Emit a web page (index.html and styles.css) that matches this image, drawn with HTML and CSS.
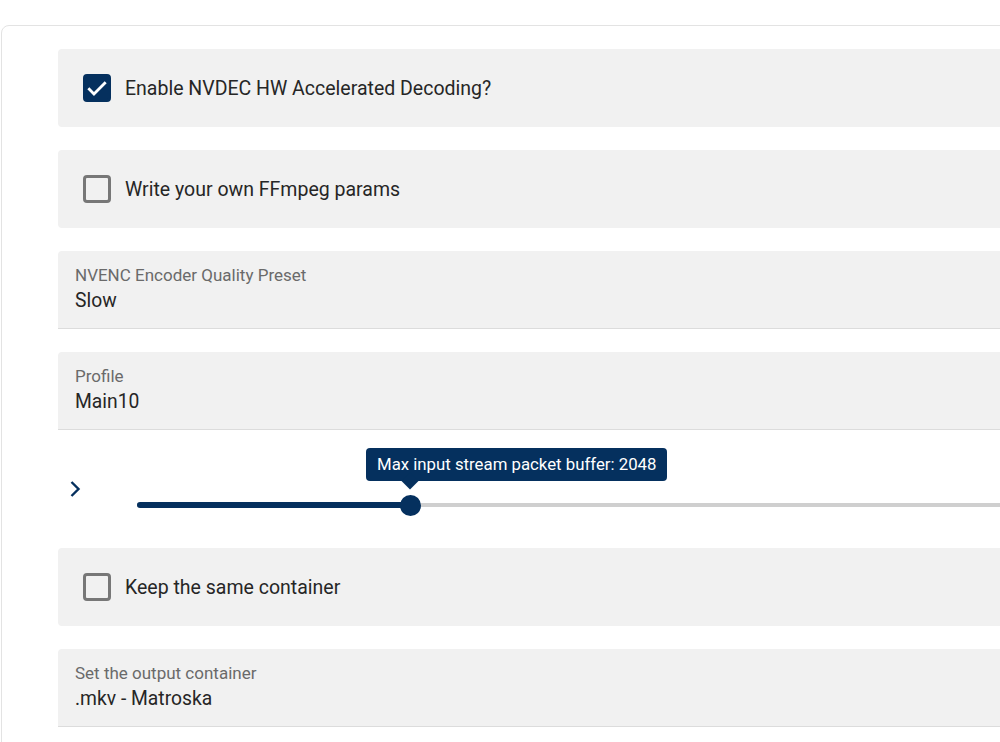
FILE: index.html
```html
<!DOCTYPE html>
<html lang="en">
<head>
    <meta charset="UTF-8">
    <meta name="viewport" content="width=device-width, initial-scale=1.0">
    <title>Transcode settings</title>
    <link rel="stylesheet" href="styles.css">
</head>
<body>
    <div class="card">
        <label class="panel check-row">
            <span class="box checked">
                <svg class="tick" viewBox="0 0 24 24" width="26" height="26"><path d="M4 12.3l5.2 5.2L20 6.8" fill="none" stroke="#fff" stroke-width="2.6"/></svg>
            </span>
            <span class="check-text">Enable NVDEC HW Accelerated Decoding?</span>
        </label>

        <label class="panel check-row">
            <span class="box"></span>
            <span class="check-text">Write your own FFmpeg params</span>
        </label>

        <div class="panel field">
            <span class="field-label">NVENC Encoder Quality Preset</span>
            <span class="field-value">Slow</span>
        </div>

        <div class="panel field">
            <span class="field-label">Profile</span>
            <span class="field-value">Main10</span>
        </div>

        <div class="slider-row">
            <svg class="chevron" viewBox="0 0 12 18" width="12" height="18"><path d="M2.5 2l7 7-7 7" fill="none" stroke="#05305e" stroke-width="2.4"/></svg>
            <div class="slider">
                <div class="track"></div>
                <div class="track-fill" style="width: 273px"></div>
                <div class="thumb" style="left: 273px">
                    <div class="tip">Max input stream packet buffer: 2048</div>
                </div>
            </div>
        </div>

        <label class="panel check-row">
            <span class="box"></span>
            <span class="check-text">Keep the same container</span>
        </label>

        <div class="panel field">
            <span class="field-label">Set the output container</span>
            <span class="field-value">.mkv - Matroska</span>
        </div>
    </div>
</body>
</html>
```

FILE: styles.css
```css
body {
    margin: 0;
    padding: 0;
    background-color: #fff;
    font-family: Roboto, "Liberation Sans", sans-serif;
    color: #222;
    overflow: hidden;
}

.card {
    width: 1100px;
    margin: 25px 0 0 1px;
    padding: 23px 0 40px 56px;
    border: 1px solid #e3e3e3;
    border-radius: 8px 0 0 0;
}

.panel {
    height: 78px;
    margin-bottom: 23px;
    background-color: #f1f1f1;
    border-radius: 4px 0 0 4px;
    box-sizing: border-box;
}

.check-row {
    display: flex;
    align-items: center;
    padding-left: 25px;
    cursor: pointer;
}

.box {
    width: 28px;
    height: 28px;
    box-sizing: border-box;
    border: 3px solid #777;
    border-radius: 4px;
    display: flex;
    align-items: center;
    justify-content: center;
}

.box.checked {
    background-color: #05305e;
    border-color: #05305e;
}

.tick {
    flex: none;
}

.check-text {
    margin-left: 14px;
    font-size: 19.5px;
    color: #262626;
}

.field {
    display: flex;
    flex-direction: column;
    padding: 14px 17px 0;
    border-radius: 4px 0 0 0;
    border-bottom: 1px solid #dcdcdc;
}

.field-label {
    font-size: 17px;
    color: #6a6a6a;
}

.field-value {
    margin-top: 4px;
    font-size: 19.3px;
    color: #262626;
}

/* slider with the value bubble */
.slider-row {
    display: flex;
    align-items: center;
    height: 72px;
    margin-bottom: 23px;
}

.chevron {
    margin-left: 11px;
}

.slider {
    position: relative;
    flex: 1;
    height: 72px;
    margin-left: 56px;
}

.track {
    position: absolute;
    left: 0;
    right: 0;
    top: 50px;
    height: 4px;
    background-color: #cfcfcf;
}

.track-fill {
    position: absolute;
    left: 0;
    top: 49px;
    height: 6px;
    border-radius: 3px;
    background-color: #05305e;
}

.thumb {
    position: absolute;
    top: 42px;
    width: 21px;
    height: 21px;
    margin-left: -10px;
    border-radius: 50%;
    background-color: #05305e;
}

.tip {
    position: absolute;
    bottom: 35px;
    left: -34px;
    white-space: nowrap;
    padding: 0 11px;
    height: 33px;
    line-height: 33px;
    font-size: 16.8px;
    color: #fff;
    background-color: #05305e;
    border-radius: 4px;
}

.tip::after {
    content: '';
    position: absolute;
    left: 38px;
    bottom: -6px;
    width: 12px;
    height: 12px;
    background-color: #05305e;
    transform: rotate(45deg);
}
```
